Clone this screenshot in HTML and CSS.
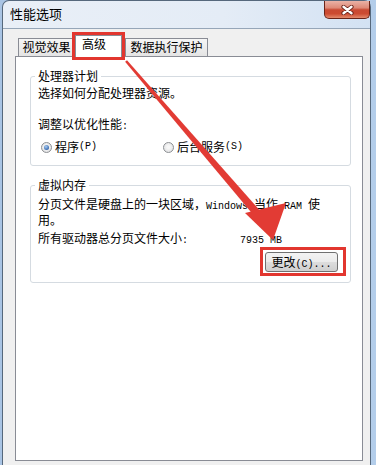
FILE: index.html
```html
<!DOCTYPE html>
<html lang="zh-CN">
<head>
<meta charset="utf-8">
<title>性能选项</title>
<link rel="stylesheet" href="styles.css">
</head>
<body>
<div class="window">
  <div class="titlebar">
    <span class="title">性能选项</span>
    <button class="close" aria-label="关闭">
      <svg width="13" height="10" viewBox="0 0 13 10">
        <path d="M2.5 1.8 L10.5 8.2 M10.5 1.8 L2.5 8.2" stroke="#6b241a" stroke-width="4.2" stroke-linecap="round" fill="none"/>
        <path d="M2.5 1.8 L10.5 8.2 M10.5 1.8 L2.5 8.2" stroke="#ffffff" stroke-width="2.4" stroke-linecap="round" fill="none"/>
      </svg>
    </button>
  </div>
  <div class="client">
    <div class="tabs">
      <div class="tab t1">视觉效果</div>
      <div class="tab active">高级</div>
      <div class="tab t3">数据执行保护</div>
    </div>
    <div class="panel">
      <fieldset class="group g1">
        <legend>处理器计划</legend>
        <p class="line">选择如何分配处理器资源。</p>
        <p class="line gap-top">调整以优化性能<span class="en">:</span></p>
        <div class="radios">
          <label class="radio-item"><span class="radio on"></span>程序<span class="en">(P)</span></label>
          <label class="radio-item"><span class="radio"></span>后台服务<span class="en">(S)</span></label>
        </div>
      </fieldset>
      <fieldset class="group g2">
        <legend>虚拟内存</legend>
        <p class="para">分页文件是硬盘上的一块区域，<span class="en">Windows </span>当作<span class="en"> RAM </span>使<br>用。</p>
        <div class="size-row"><span class="size-label">所有驱动器总分页文件大小<span class="en">:</span></span><span class="en">7935 MB</span></div>
        <div class="btn-row"><span class="mark"><button class="btn">更改<span class="en">(C)...</span></button></span></div>
      </fieldset>
    </div>
  </div>
</div>
<svg class="arrow" width="376" height="465" viewBox="0 0 376 465">
  <polygon points="127,60.2 259,209.4 253,214.6 125.1,61.8" fill="#e23b34"/>
  <polygon points="245,213 286,203 273,240" fill="#e23b34"/>
</svg>
</body>
</html>
```

FILE: styles.css
```css
* { box-sizing: border-box; }
html, body { margin: 0; padding: 0; }
body {
  width: 376px;
  height: 465px;
  overflow: hidden;
  position: relative;
  background: linear-gradient(90deg, #a9c4e4, #c4d9ef 50%, #b3cdea);
  font-family: "Noto Sans CJK SC", "Liberation Sans", sans-serif;
  font-size: 12px;
  color: #000;
}
.window {
  margin-left: 2px;
  width: 369px;
  height: 465px;
  border: 1px solid #56687c;
  border-bottom: none;
  border-radius: 7px 7px 0 0;
  background: linear-gradient(90deg, #e9eff7, #e4ecf6 60%, #d3e2f3);
  display: flex;
  flex-direction: column;
}
.titlebar {
  height: 27px;
  flex: none;
  display: flex;
  align-items: flex-start;
  padding-left: 7px;
}
.title {
  font-size: 13px;
  line-height: 16px;
  margin-top: 5px;
}
.close {
  margin-left: auto;
  width: 46px;
  height: 18px;
  padding: 0;
  border: 1px solid #6a2418;
  border-top: none;
  border-radius: 0 0 5px 5px;
  background: linear-gradient(180deg, #eab2a6 0%, #de8a78 40%, #c94a33 52%, #cc4b31 75%, #e48a6c 100%);
  display: flex;
  align-items: center;
  justify-content: center;
}
.close svg { display: block; }
.client {
  flex: 1;
  display: flex;
  flex-direction: column;
  background: #f0f0f0;
  border-top: 1px solid #96a6b8;
  padding: 6px 7px 4px 12px;
}
.tabs {
  flex: none;
  display: flex;
  align-items: flex-end;
  padding-left: 3px;
}
.tab {
  height: 18px;
  line-height: 16px;
  border: 1px solid #898c95;
  border-bottom: none;
  background: linear-gradient(180deg, #f6f6f6, #e4e4e4);
  text-align: center;
  white-space: nowrap;
}
.t1 { width: 57px; }
.t3 { width: 83px; margin-left: 3px; }
.tab.active {
  width: 47px;
  height: 22px;
  margin-bottom: -1px;
  padding: 1px 0 0 6px;
  line-height: 14px;
  text-align: left;
  background: #fff;
  position: relative;
  z-index: 1;
  outline: 3px solid #e2362f;
}
.panel {
  flex: 1;
  background: #fff;
  border: 1px solid #898c95;
  padding: 0 0 0 14px;
}
.group {
  width: 321px;
  min-width: 0;
  margin: 12px 0 0;
  border: 1px solid #d5dbe1;
  border-radius: 3px;
}
.group legend {
  padding: 0 3px;
  margin-left: -3px;
  line-height: 14px;
}
.g1 { padding: 3px 12px 11px 7px; }
.g2 { padding: 5px 4px 6px 7px; }
.line { margin: 0; line-height: 14px; }
.gap-top { margin-top: 17px; }
.radios {
  display: grid;
  grid-template-columns: 122px auto;
  margin-top: 6px;
  padding-left: 3px;
  line-height: 14px;
}
.radio-item { display: flex; align-items: center; }
.radio {
  width: 11px;
  height: 11px;
  margin-right: 3px;
  border: 1px solid #8c8f93;
  border-radius: 50%;
  background: radial-gradient(circle at 50% 45%, #f7f7f7 20%, #d9dadc 100%);
  display: flex;
  align-items: center;
  justify-content: center;
}
.radio.on::after {
  content: "";
  width: 5px;
  height: 5px;
  border-radius: 50%;
  background: radial-gradient(circle at 40% 35%, #a9cdf2, #2a5da8 80%);
}
.para { margin: 0; line-height: 13px; }
.size-row { margin-top: 5px; line-height: 14px; }
.size-label { display: inline-block; width: 202px; }
.btn-row {
  display: flex;
  justify-content: flex-end;
  margin-top: -1px;
}
.mark {
  display: inline-block;
  border: 3px solid #e2362f;
  padding: 2px 5px 1px 2px;
}
.btn {
  display: block;
  width: 73px;
  height: 20px;
  padding: 0;
  border: 1px solid #707070;
  border-radius: 3px;
  background: linear-gradient(180deg, #f3f3f3, #ebebeb 50%, #dddddd 50%, #cfcfcf);
  font: inherit;
  line-height: 18px;
  color: #000;
  text-align: center;
}
.en {
  font-family: "Liberation Mono", "DejaVu Sans Mono", monospace;
  font-size: 10px;
}
.arrow {
  position: absolute;
  left: 0;
  top: 0;
  pointer-events: none;
}
```
